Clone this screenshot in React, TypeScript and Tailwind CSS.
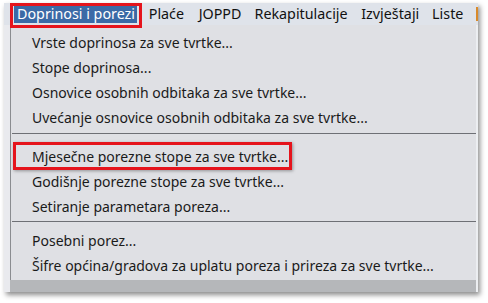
import React from "react";

const font = { fontFamily: '"Noto Sans", "Open Sans", sans-serif' };

function Item({ children }: { children: React.ReactNode }) {
  return (
    <div className="h-[25px] flex items-center pl-[21px] text-[14px] text-[#1a1a1a] whitespace-nowrap">
      {children}
    </div>
  );
}

export default function App() {
  return (
    <div className="w-[488px] h-[303px] bg-white relative overflow-hidden" style={font}>
      <div className="absolute left-[4px] top-[3px] w-[474px] h-[289px] shadow-[2px_3px_5px_rgba(0,0,0,0.45)] flex flex-col bg-[#e8e9ec] overflow-hidden">
        {/* menu bar */}
        <div className="h-[22px] bg-[#dfe3ea] flex items-center text-[14.3px] text-[#111] whitespace-nowrap">
          <div className="ml-[10px] w-[123px] h-[18px] pl-[3px] bg-[#3b6aa6] text-white flex items-center">Doprinosi i porezi</div>
          <div className="ml-[12px] w-[50px]">Plaće</div>
          <div className="w-[56px]">JOPPD</div>
          <div className="w-[107px]">Rekapitulacije</div>
          <div className="w-[71px]">Izvještaji</div>
          <div className="w-[44px]">Liste</div>
          <div className="w-[2px] h-[14px] bg-[#d98a2b]" />
        </div>
        {/* body */}
        <div className="flex-1 flex">
          <div className="w-[6px] bg-[#e9eaee]" />
          <div className="flex-1 flex flex-col">
            <div className="flex-1 border-l border-[#8a8c90] bg-[#dfe0e4] pt-[5px]">
              <Item>Vrste doprinosa za sve tvrtke...</Item>
              <Item>Stope doprinosa...</Item>
              <Item>Osnovice osobnih odbitaka za sve tvrtke...</Item>
              <Item>Uvećanje osnovice osobnih odbitaka za sve tvrtke...</Item>
              <div className="h-[14px] pt-[3px] pl-[1px]">
                <div className="w-full h-[1px] bg-[#6e7075]" />
              </div>
              <Item>Mjesečne porezne stope za sve tvrtke...</Item>
              <Item>Godišnje porezne stope za sve tvrtke...</Item>
              <Item>Setiranje parametara poreza...</Item>
              <div className="h-[9px] pt-[2px] pl-[1px]">
                <div className="w-full h-[1px] bg-[#6e7075]" />
              </div>
              <Item>Posebni porez...</Item>
              <Item>Šifre općina/gradova za uplatu poreza i prireza za sve tvrtke...</Item>
            </div>
            <div className="h-[12px] bg-[#b5b7ba]" />
          </div>
          <div className="w-[2px] bg-[#eceef1]" />
        </div>
      </div>
      {/* red highlight boxes */}
      <div className="absolute left-[10px] top-[3px] w-[132px] h-[25px] border-[3px] border-[#e5141c]" />
      <div className="absolute left-[13px] top-[142px] w-[279px] h-[28px] border-[3px] border-[#e5141c] shadow-[1px_1px_3px_rgba(0,0,0,0.35)]" />
    </div>
  );
}
